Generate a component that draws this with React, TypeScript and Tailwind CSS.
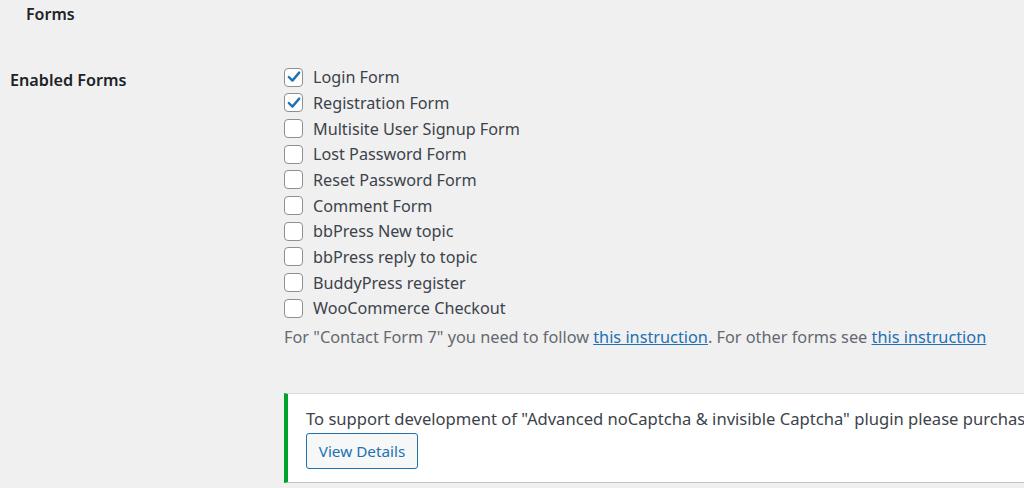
import React from "react";

const items: { label: string; checked: boolean }[] = [
  { label: "Login Form", checked: true },
  { label: "Registration Form", checked: true },
  { label: "Multisite User Signup Form", checked: false },
  { label: "Lost Password Form", checked: false },
  { label: "Reset Password Form", checked: false },
  { label: "Comment Form", checked: false },
  { label: "bbPress New topic", checked: false },
  { label: "bbPress reply to topic", checked: false },
  { label: "BuddyPress register", checked: false },
  { label: "WooCommerce Checkout", checked: false },
];

function Box({ checked }: { checked: boolean }) {
  return (
    <span className="w-[19px] h-[19px] shrink-0 rounded-[4px] border border-[#8c8f94] bg-white flex items-center justify-center">
      {checked && (
        <svg width="16" height="16" viewBox="0 0 20 20">
          <path d="M3.5 10 L8 14.5 L16.5 4.5" fill="none" stroke="#2271b1" strokeWidth="3" strokeLinecap="round" strokeLinejoin="round" />
        </svg>
      )}
    </span>
  );
}

export default function App() {
  return (
    <div
      className="w-[1024px] h-[488px] overflow-hidden bg-[#f0f0f1] text-[#3c434a]"
      style={{ fontFamily: '"Noto Sans", "Open Sans", sans-serif' }}
    >
      <div className="pl-[26px] pt-[2px] h-[26px] text-[16px] font-semibold text-[#1d2327] leading-[24px]">
        Forms
      </div>
      <div className="flex mt-[37px]">
        <div className="w-[284px] pl-[10px] pt-[5px] text-[16.2px] font-semibold text-[#1d2327] leading-[24px] shrink-0">
          Enabled Forms
        </div>
        <div className="flex-1 min-w-0">
          <div className="flex flex-col pt-[1.5px]">
            {items.map((it) => (
              <label key={it.label} className="h-[25.67px] flex items-center gap-[10px] text-[16.2px] leading-[20px]">
                <Box checked={it.checked} />
                <span>{it.label}</span>
              </label>
            ))}
          </div>
          <p className="mt-[3px] h-[26px] text-[16.3px] leading-[26px] text-[#646970] whitespace-nowrap">
            For "Contact Form 7" you need to follow{" "}
            <a className="text-[#2271b1] underline">this instruction</a>. For other forms see{" "}
            <a className="text-[#2271b1] underline">this instruction</a>
          </p>
          <div className="mt-[43px] h-[90px] bg-white border-l-4 border-l-[#00a32a] border-t border-t-[#dcdcde] border-b border-b-[#c3c4c7] pl-[18px] pt-[14px] whitespace-nowrap">
            <p className="text-[16.6px] leading-[22px] text-[#3c434a]">
              To support development of "Advanced noCaptcha &amp; invisible Captcha" plugin please purchase
            </p>
            <button className="mt-[3px] h-[36px] w-[112px] rounded-[3px] border border-[#2271b1] bg-[#f6f7f7] text-[#2271b1] text-[15.3px] leading-[20px]">
              View Details
            </button>
          </div>
        </div>
      </div>
    </div>
  );
}
